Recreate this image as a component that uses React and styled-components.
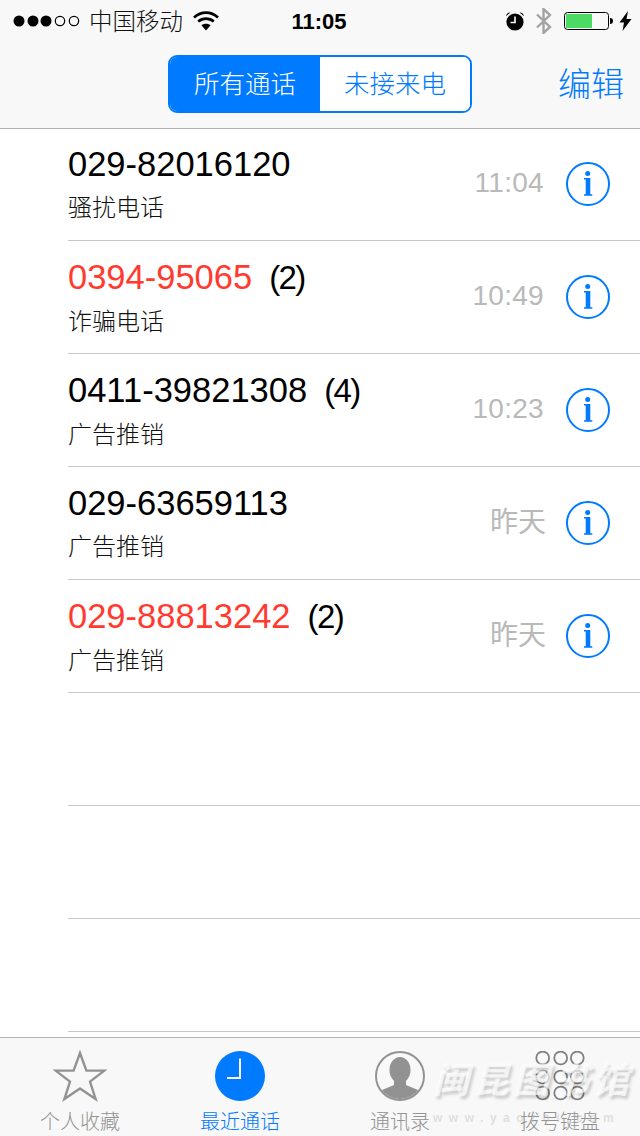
import React from "react";
import styled, { createGlobalStyle } from "styled-components";

const BLUE = "#007aff";
const CJK = `"Liberation Sans", "Noto Sans CJK SC", sans-serif`;

const Global = createGlobalStyle`
  html, body { margin: 0; padding: 0; background: #fff; }
  body { font-family: ${CJK}; }
`;

const Phone = styled.div`
  position: relative;
  width: 640px;
  height: 1136px;
  overflow: hidden;
  display: flex;
  flex-direction: column;
  background: #fff;
`;

const Header = styled.header`
  background: #f8f8f8;
  border-bottom: 1px solid #b2b2b2;
  height: 128px;
  flex: none;
  display: flex;
  flex-direction: column;
`;

const StatusBar = styled.div`
  height: 42px;
  display: grid;
  grid-template-columns: 1fr auto 1fr;
  align-items: center;
  color: #000;
  padding: 0 8px 0 13px;
`;

const StatusLeft = styled.div`
  display: flex;
  align-items: center;
`;

const StatusRight = styled.div`
  display: flex;
  align-items: center;
  justify-content: flex-end;
`;

const Carrier = styled.span`
  font-size: 23.5px;
  font-weight: 300;
  line-height: 40px;
  padding-top: 2px;
  margin: 0 10px 0 8px;
  color: #111;
`;

const Clock = styled.span`
  font-size: 22px;
  font-weight: 700;
  line-height: 40px;
  padding-top: 2px;
  margin-right: 7px;
`;

const NavBar = styled.div`
  position: relative;
  flex: 1;
  display: flex;
  justify-content: center;
  padding-top: 13px;
`;

const Segments = styled.div`
  display: flex;
  width: 304px;
  height: 58px;
  box-sizing: border-box;
  border: 2px solid ${BLUE};
  border-radius: 9px;
  overflow: hidden;
  background: #fff;
`;

const Segment = styled.div`
  flex: 1;
  display: flex;
  align-items: center;
  justify-content: center;
  font-size: 25.5px;
  font-weight: 300;
  padding-bottom: 5px;
  background: ${(p) => (p.$active ? BLUE : "#fff")};
  color: ${(p) => (p.$active ? "#fff" : BLUE)};
`;

const EditButton = styled.span`
  position: absolute;
  right: 16px;
  top: 18px;
  font-size: 33px;
  line-height: 50px;
  font-weight: 300;
  color: ${BLUE};
`;

const List = styled.main`
  flex: 1;
  min-height: 0;
`;

const Row = styled.div`
  height: 113px;
  box-sizing: border-box;
  margin-left: 68px;
  padding-right: 30px;
  border-bottom: 1px solid #c8c7cc;
  display: flex;
  align-items: flex-start;
  &:first-child { height: 112px; }
`;

const RowMain = styled.div`
  flex: 1;
  min-width: 0;
`;

const NumberLine = styled.div`
  display: flex;
  align-items: baseline;
  font-size: 34.5px;
  line-height: 40px;
  margin-top: ${(p) => (p.$first ? "15px" : "16px")};
  color: ${(p) => (p.$missed ? "#ff3b30" : "#000")};
`;

const Count = styled.span`
  color: #000;
  margin-left: 17px;
  font-size: 33px;
  letter-spacing: -1.6px;
`;

const Label = styled.div`
  font-size: 24px;
  font-weight: 300;
  line-height: 34px;
  margin-top: 7px;
  color: #111;
`;

const Time = styled.div`
  color: #b9b9b9;
  font-size: 28px;
  line-height: 40px;
  margin-top: ${(p) => (p.$first ? "34px" : p.$cjk ? "36px" : "35px")};
  margin-right: ${(p) => (p.$cjk ? "20px" : "22px")};
  letter-spacing: ${(p) => (p.$cjk ? "0" : "0.3px")};
`;

const InfoWrap = styled.div`
  width: 44px;
  height: 44px;
  flex: none;
  margin-top: ${(p) => (p.$first ? "33px" : "34px")};
`;

const TabBar = styled.nav`
  flex: none;
  height: 99px;
  box-sizing: border-box;
  background: #f8f8f8;
  border-top: 1px solid #b2b2b2;
  display: grid;
  grid-template-columns: repeat(4, 160px);
`;

const Tab = styled.div`
  display: flex;
  flex-direction: column;
  align-items: center;
  padding-top: 12px;
  color: ${(p) => (p.$active ? BLUE : "#929292")};
`;

const TabIcon = styled.div`
  width: 54px;
  height: 52px;
  display: flex;
  align-items: center;
  justify-content: center;
`;

const TabLabel = styled.span`
  font-size: 20px;
  font-weight: 300;
  line-height: 28px;
  margin-top: 6px;
`;

const Watermark = styled.div`
  position: absolute;
  left: 433px;
  top: 1058px;
  width: 207px;
  pointer-events: none;
  color: rgba(255, 255, 255, 0.7);
  text-shadow: 2px 3px 3px rgba(0, 0, 0, 0.18);
`;

const WatermarkTitle = styled.div`
  font-size: 36px;
  font-weight: 700;
  font-style: italic;
  line-height: 46px;
  white-space: nowrap;
  letter-spacing: 4px;
`;

const WatermarkUrl = styled.div`
  font-size: 12px;
  font-weight: 700;
  line-height: 14px;
  margin-top: 7px;
  letter-spacing: 6.5px;
  white-space: nowrap;
  color: rgba(190, 190, 190, 0.45);
  text-shadow: none;
`;

const Gap = styled.span`
  flex: none;
  width: ${(p) => p.$w}px;
`;

const Signal = () => (
  <svg width="68" height="16" viewBox="0 0 68 16">
    {[6, 20, 33].map((x) => <circle key={x} cx={x} cy="8" r="5.5" fill="#000" />)}
    {[47, 61].map((x) => <circle key={x} cx={x} cy="8" r="4.7" fill="none" stroke="#000" strokeWidth="1.2" />)}
  </svg>
);

const Wifi = () => (
  <svg width="26" height="20" viewBox="0 0 26 20">
    <path d="M1 6.5C8 0 18 0 25 6.5" fill="none" stroke="#000" strokeWidth="2.6" />
    <path d="M5.2 10.6c4.6-4 11-4 15.6 0" fill="none" stroke="#000" strokeWidth="2.6" />
    <path d="M13 19.5l-4.6-5.2c2.6-2 6.6-2 9.2 0z" fill="#000" />
  </svg>
);

const Alarm = () => (
  <svg width="20" height="20" viewBox="0 0 20 20">
    <circle cx="10" cy="11" r="8.6" fill="#000" />
    <path d="M1 5.2C1.4 2.6 3.2 1.2 5.4 1.4zM19 5.2c-.4-2.6-2.2-4-4.4-3.8z" fill="#000" />
    <path d="M10 5.5v6H5.5" fill="none" stroke="#fff" strokeWidth="1.6" />
  </svg>
);

const Bluetooth = () => (
  <svg width="18" height="26" viewBox="0 0 18 26">
    <path d="M2 6.5l13 12.5-6.5 6V1L15 7 2 19.5" fill="none" stroke="#a3a3a3" strokeWidth="2.4" />
  </svg>
);

const Battery = () => (
  <svg width="50" height="20" viewBox="0 0 50 20">
    <rect x="0.5" y="1.5" width="44" height="17" rx="3" fill="none" stroke="#000" strokeWidth="1" />
    <rect x="2" y="3" width="26" height="14" fill="#4cd964" />
    <path d="M46 7c2 0 3 1.2 3 3s-1 3-3 3z" fill="#000" />
  </svg>
);

const Bolt = () => (
  <svg width="13" height="20" viewBox="0 0 13 20">
    <path d="M9 0L0.5 11.5h4.5L3.5 20 12.5 8H7.5z" fill="#000" />
  </svg>
);

const InfoIcon = () => (
  <svg width="44" height="44" viewBox="0 0 44 44">
    <circle cx="22" cy="22" r="21" fill="none" stroke={BLUE} strokeWidth="2" />
    <circle cx="21.7" cy="11.5" r="2.5" fill={BLUE} />
    <path d="M18 16h6.3v16.2h2V33.7H18v-1.5h1.7V17.5H18z" fill={BLUE} />
  </svg>
);

const StarIcon = () => (
  <svg width="54" height="52" viewBox="0 0 54 52">
    <path d="M27 3l6.4 17.6h18L37 31.6 42.6 49 27 38.4 11.4 49 17 31.6 2.6 20.6h18z" fill="none" stroke="#929292" strokeWidth="2.4" />
  </svg>
);

const ClockIcon = () => (
  <svg width="50" height="50" viewBox="0 0 50 50">
    <circle cx="25" cy="25" r="25" fill={BLUE} />
    <path d="M25 7.5V27H12" fill="none" stroke="#fff" strokeWidth="2" />
  </svg>
);

const ContactIcon = () => (
  <svg width="50" height="50" viewBox="0 0 50 50">
    <defs>
      <clipPath id="contact-clip"><circle cx="25" cy="25" r="23" /></clipPath>
    </defs>
    <circle cx="25" cy="25" r="24" fill="none" stroke="#929292" strokeWidth="2" />
    <g clipPath="url(#contact-clip)" fill="#929292">
      <ellipse cx="25" cy="19" rx="10.5" ry="13" />
      <path d="M19 28h12v6l12 5 3 12H4l3-12 12-5z" />
    </g>
  </svg>
);

const PadIcon = () => (
  <svg width="50" height="50" viewBox="0 0 50 50">
    {[7, 26, 42].flatMap((y) =>
      [7.7, 25.7, 42.3].map((x) => (
        <circle key={`${x}-${y}`} cx={x} cy={y} r="6.4" fill="none" stroke="#808080" strokeWidth="1.8" />
      ))
    )}
  </svg>
);

const calls = [
  { number: "029-82016120", label: "骚扰电话", time: "11:04" },
  { number: "0394-95065", count: 2, label: "诈骗电话", time: "10:49", missed: true },
  { number: "0411-39821308", count: 4, label: "广告推销", time: "10:23" },
  { number: "029-63659113", label: "广告推销", time: "昨天", cjk: true },
  { number: "029-88813242", count: 2, label: "广告推销", time: "昨天", cjk: true, missed: true },
];

const tabs = [
  { label: "个人收藏", icon: <StarIcon /> },
  { label: "最近通话", icon: <ClockIcon />, active: true },
  { label: "通讯录", icon: <ContactIcon /> },
  { label: "拨号键盘", icon: <PadIcon /> },
];

export default function App() {
  return (
    <Phone>
      <Global />
      <Header>
        <StatusBar>
          <StatusLeft>
            <Signal />
            <Carrier>中国移动</Carrier>
            <Wifi />
          </StatusLeft>
          <Clock>11:05</Clock>
          <StatusRight>
            <Alarm />
            <Gap $w={10} />
            <Bluetooth />
            <Gap $w={11} />
            <Battery />
            <Gap $w={5} />
            <Bolt />
          </StatusRight>
        </StatusBar>
        <NavBar>
          <Segments>
            <Segment $active>所有通话</Segment>
            <Segment>未接来电</Segment>
          </Segments>
          <EditButton>编辑</EditButton>
        </NavBar>
      </Header>
      <List>
        {calls.map((c, i) => (
          <Row key={i}>
            <RowMain>
              <NumberLine $missed={c.missed} $first={i === 0}>
                {c.number}
                {c.count ? <Count>({c.count})</Count> : null}
              </NumberLine>
              <Label>{c.label}</Label>
            </RowMain>
            <Time $cjk={c.cjk} $first={i === 0}>{c.time}</Time>
            <InfoWrap $first={i === 0}><InfoIcon /></InfoWrap>
          </Row>
        ))}
        <Row />
        <Row />
        <Row />
      </List>
      <TabBar>
        {tabs.map((t) => (
          <Tab key={t.label} $active={t.active}>
            <TabIcon>{t.icon}</TabIcon>
            <TabLabel>{t.label}</TabLabel>
          </Tab>
        ))}
      </TabBar>
      <Watermark>
        <WatermarkTitle>闽昆图书馆</WatermarkTitle>
        <WatermarkUrl>www.yaozhi.com</WatermarkUrl>
      </Watermark>
    </Phone>
  );
}
